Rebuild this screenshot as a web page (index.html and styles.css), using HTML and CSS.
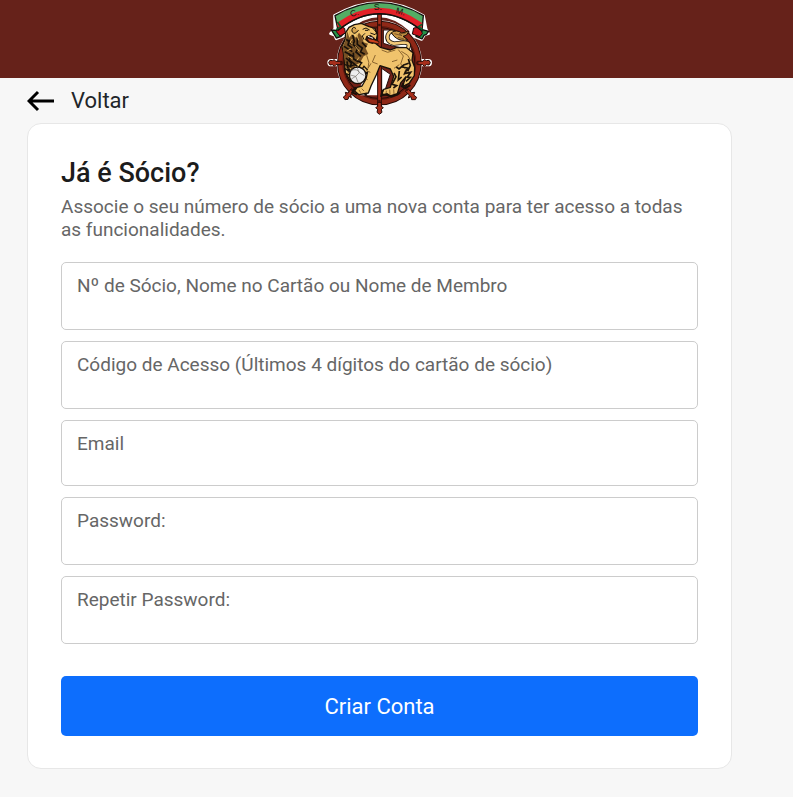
FILE: index.html
```
<!DOCTYPE html>
<html lang="pt">
<head>
<meta charset="utf-8">
<meta name="viewport" content="width=device-width, initial-scale=1">
<title>Criar Conta</title>
<link rel="stylesheet" href="styles.css">
</head>
<body>
<header class="topbar">
  <svg class="crest" viewBox="0 0 360 360" role="img" aria-label="CSM">
    <!-- White outline behind the whole crest -->
    <g fill="none" stroke="#fff" stroke-linecap="round" stroke-linejoin="round">
      <circle cx="178" cy="189" r="119" stroke-width="18"/>
      <path d="M33 188H325M79 291L92 278M266 278L280 291M178 310V335" stroke-width="22"/>
      <path d="M44 47Q178-31 310 47L318 88L325 101L313 104L305 118L277 107L270 89Q178 6 84 88L76 105L49 116L44 105L32 101L45 86Z" fill="#fff" stroke-width="9"/>
    </g>
    <!-- Ship's wheel -->
    <circle cx="178" cy="189" r="116" fill="#742218" stroke="#260a06" stroke-width="22"/>
    <circle cx="178" cy="189" r="116" fill="none" stroke="#8f2817" stroke-width="16"/>
    <circle cx="178" cy="189" r="110" fill="none" stroke="#42110b" stroke-width="2"/>
    <path d="M190 90Q218 87 246 106L267 129Q275 142 277 158L250 145L213 137L190 130Z" fill="#fff" stroke="#260a06" stroke-width="3"/>
    <path d="M145 204L174 198V286H121L119 265Z" fill="#fff"/>
    <path d="M185 205L211 223L195 271L185 276Z" fill="#fff" stroke="#260a06" stroke-width="3"/>
    <path d="M173 34H184V328H173Z" fill="#a72e1b" stroke="#260a06" stroke-width="3"/>
    <g fill="#a72e1b" stroke="#260a06" stroke-width="3" stroke-linejoin="round">
      <path d="M66 184H47L43 179L37 182L30 181L26 188L30 195L37 194L43 199L48 194H66Z"/>
      <path d="M292 184H309L313 179L319 182L327 181L331 188L327 195L319 194L313 199L308 194H292Z"/>
      <path d="M94 266L84 279L76 277L78 285L70 291L75 299L84 298L87 289L94 293L92 284L103 274Z"/>
      <path d="M256 274L268 285L265 294L273 290L275 299L286 299L290 292L281 285L284 277L275 278L264 266Z"/>
      <path d="M173 307V319L167 323L173 328L171 337L178 343L186 337L184 328L190 323L184 319V307Z"/>
    </g>
    <g fill="#42110b">
      <circle cx="64" cy="189" r="4"/><circle cx="292" cy="189" r="4"/>
      <circle cx="178" cy="75" r="4"/><circle cx="178" cy="303" r="4"/>
      <circle cx="97" cy="270" r="4"/><circle cx="260" cy="270" r="4"/>
    </g>
    <!-- Tail -->
    <path d="M261 150Q276 126 249 128L222 131Q198 125 203 106Q208 90 224 98" fill="none" stroke="#19110a" stroke-width="13"/>
    <path d="M261 150Q276 126 249 128L222 131Q198 125 203 106Q208 90 224 98" fill="none" stroke="#f3ca79" stroke-width="8"/>
    <path d="M214 98Q230 87 245 99L267 94Q261 109 249 109L263 119Q243 124 230 115Q222 111 214 98Z" fill="#c99745" stroke="#19110a" stroke-width="3"/>
    <path d="M223 101L246 107L237 101L257 101M234 112L252 117" fill="none" stroke="#593d1c" stroke-width="2"/>
    <!-- Lion -->
    <path d="M103 74L87 82L77 98L75 119L66 139L70 158L73 182L76 218L92 244L114 245L129 226L143 215L138 237L126 258L111 262L104 273L117 284L145 279L153 258L169 224L180 197L211 207L221 229L211 262L191 268L185 282L211 288L232 281L242 249L258 230L247 260L267 250L283 227L284 202L276 181L279 158L260 143L231 142L211 150L181 142L165 129L151 127L143 119L153 116L169 120L172 105L165 85L147 80L124 70Z" fill="#f0c36c" stroke="#19110a" stroke-width="4" stroke-linejoin="round"/>
    <path d="M82 94L77 121L68 140L71 161L76 196L85 221L91 203L101 215L107 194L119 190L131 169L145 162L137 145L144 131L131 127L126 109L117 98L108 113L96 103L88 113Z" fill="#775124"/>
    <path d="M79 118L95 132M72 139L97 155M74 155L103 171M78 174L94 189L91 202M83 207L101 216M98 105L103 124L99 133L113 146L108 156L123 169M112 113L112 133L127 144L122 156L134 163M88 119L84 135L97 144M81 184L84 205M100 158L101 177L115 185M88 160L89 181L105 193M126 127L139 141M101 192L112 198M115 183L127 190" fill="none" stroke="#160f09" stroke-width="5"/>
    <path d="M91 90L88 105M97 117L90 127L98 132M110 103L116 121M106 139L118 154M93 147L82 152M84 168L98 177M117 172L111 181" fill="none" stroke="#e0ae54" stroke-width="3"/>
    <path d="M108 86Q100 77 96 88Q94 99 105 100L116 91" fill="#d4a14d" stroke="#19110a" stroke-width="3"/>
    <path d="M128 88L138 84L149 90M135 91H145M158 84L170 98L165 104L151 99M135 100L127 108L132 119" fill="none" stroke="#19110a" stroke-width="3"/>
    <path d="M139 108L152 105L163 113L168 122L158 132L145 128L135 119Z" fill="#24110c"/>
    <path d="M140 115L161 119L177 125L176 131L148 126Z" fill="#cf421e" stroke="#19110a" stroke-width="2"/>
    <path d="M144 109L151 112L159 115" fill="none" stroke="#fff" stroke-width="3"/>
    <path d="M140 166Q151 188 144 205L153 190M166 165L157 186L173 192M185 150L203 157L226 150M235 149L250 168L242 192L257 208L252 226M222 205L238 194M244 154L263 166L273 183M216 185L232 180M127 233L143 239M139 212L151 217M125 266L132 273M117 270L122 278M199 272L198 282M209 269L210 284M221 268L222 282" fill="none" stroke="#8b652e" stroke-width="3"/>
    <path d="M222 219L228 230L216 253L230 257L220 264M238 213L235 240L245 231M246 201L263 204L254 221L272 217L262 231L271 232L258 244M265 177L271 196L263 214M229 201L237 207L251 195L266 190" fill="none" stroke="#1c140b" stroke-width="5"/>
    <path d="M107 261L97 277L111 284M188 269L184 287L201 282L213 290L232 284L240 278M250 249L246 259L257 264L271 255M134 280L140 287" fill="none" stroke="#19110a" stroke-width="6"/>
    <path d="M75 194L91 199L104 194M75 206L90 215M79 221L95 228" fill="none" stroke="#19110a" stroke-width="4"/>
    <!-- Ball -->
    <circle cx="113" cy="226" r="25" fill="#eee" stroke="#19110a" stroke-width="4"/>
    <path d="M92 212Q112 204 118 218L133 227M90 225L107 229L118 218M107 229L115 249M112 204L118 218M94 237L107 229" fill="none" stroke="#74706a" stroke-width="2"/>
    <path d="M125 188L117 200L127 206L132 199L143 210" fill="#edbc5d" stroke="#19110a" stroke-width="4"/>
    <!-- Ribbon -->
    <path d="M49 91L34 90L43 104L49 114L62 110L72 100L66 87ZM304 88L326 94L319 103L312 106L306 117L288 109L292 88Z" fill="#259348" stroke="#130f0d" stroke-width="4" stroke-linejoin="round"/>
    <path d="M55 76L49 95L60 108L76 99L74 85ZM281 84L277 102L300 110L307 101L301 81Z" fill="#c7131c" stroke="#130f0d" stroke-width="3"/>
    <path d="M45 47Q178-31 310 47L306 92Q178-9 54 91Z" fill="#54ad64" stroke="#130f0d" stroke-width="4"/>
    <path d="M50 69Q178-23 307 69L304 91Q178-9 56 90Z" fill="#e32128"/>
    <path d="M54 91Q178-9 306 92" fill="none" stroke="#130f0d" stroke-width="4"/>
    <path d="M49 89L62 80L52 66M306 73L296 80L307 89" fill="none" stroke="#07602a" stroke-width="5"/>
    <g class="crest-letters">
      <text x="93" y="51" transform="rotate(-16 93 51)">C.</text>
      <text x="161" y="30">S.</text>
      <text x="226" y="39" transform="rotate(16 226 39)">M.</text>
    </g>
  </svg>
</header>
<main class="page">
  <a class="back" href="#">
    <svg class="back-icon" viewBox="0 0 28 22" aria-hidden="true"><path d="M27 11H2M11 2L2 11L11 20"/></svg>
    <span>Voltar</span>
  </a>
  <section class="card">
    <h1>Já é Sócio?</h1>
    <p class="intro">Associe o seu número de sócio a uma nova conta para ter acesso a todas as funcionalidades.</p>
    <form class="form">
      <div class="field">
        <label for="member">Nº de Sócio, Nome no Cartão ou Nome de Membro</label>
        <input id="member" type="text">
      </div>
      <div class="field">
        <label for="code">Código de Acesso (Últimos 4 dígitos do cartão de sócio)</label>
        <input id="code" type="text">
      </div>
      <div class="field field-email">
        <label for="email">Email</label>
        <input id="email" type="email">
      </div>
      <div class="field">
        <label for="password">Password:</label>
        <input id="password" type="password">
      </div>
      <div class="field">
        <label for="repeat">Repetir Password:</label>
        <input id="repeat" type="password">
      </div>
      <button class="submit" type="submit">Criar Conta</button>
    </form>
  </section>
</main>
</body>
</html>
```
FILE: styles.css
```
* {
  box-sizing: border-box;
}

body {
  margin: 0;
  background: #f7f7f7;
  color: #212529;
  font-family: Roboto, "Liberation Sans", sans-serif;
}

.topbar {
  display: flex;
  justify-content: center;
  height: 78px;
  padding-right: 33px;
  background: #66221a;
}

.crest {
  position: relative;
  flex: none;
  width: 120px;
  height: 120px;
}

.crest-letters {
  fill: #16120e;
  font-family: "Liberation Sans", sans-serif;
  font-size: 26px;
}

.page {
  padding: 8px 61px 28px 27px;
}

.back {
  display: inline-flex;
  align-items: center;
  gap: 16px;
  height: 30px;
  color: #212529;
  font-size: 22px;
  line-height: 30px;
  text-decoration: none;
  vertical-align: top;
}

.back-icon {
  width: 28px;
  height: 22px;
  fill: none;
  stroke: #000;
  stroke-width: 3;
}

.card {
  margin-top: 7px;
  padding: 32px 33px;
  border: 1px solid #e7e7e7;
  border-radius: 14px;
  background: #fff;
}

h1 {
  margin: 0;
  color: #1c1c1c;
  font-size: 27px;
  font-weight: 500;
  line-height: 34px;
}

.intro {
  margin: 5px 0 21px;
  color: #666;
  font-size: 19px;
  line-height: 23px;
}

.form {
  display: flex;
  flex-direction: column;
  gap: 11px;
}

.field {
  display: flex;
  flex-direction: column;
  height: 68px;
  padding: 10px 15px;
  border: 1px solid #ccc;
  border-radius: 5px;
  background: #fff;
}

.field-email {
  height: 66px;
}

.field label {
  color: #666;
  font-size: 19px;
  line-height: 26px;
}

.field input {
  flex: 1;
  min-height: 0;
  width: 100%;
  padding: 0;
  border: 0;
  outline: 0;
  background: transparent;
  font: inherit;
  font-size: 19px;
}

.submit {
  height: 60px;
  margin-top: 21px;
  border: 0;
  border-radius: 5px;
  background: #0d6efd;
  color: #fff;
  font: inherit;
  font-size: 22px;
}
```
